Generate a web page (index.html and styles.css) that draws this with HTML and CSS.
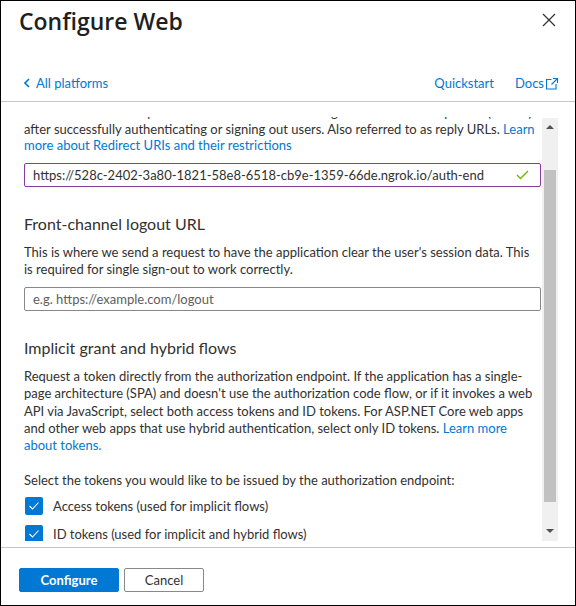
FILE: index.html
```html
<!DOCTYPE html>
<html lang="en">
<head>
<meta charset="utf-8">
<title>Configure Web</title>
<link rel="stylesheet" href="styles.css">
</head>
<body>
<div class="panel">
  <header class="head">
    <h1 class="title">Configure Web</h1>
    <button class="close" aria-label="Close">
      <svg width="14" height="14" viewBox="0 0 14 14"><path d="M1 1L13 13M13 1L1 13" stroke="#323130" stroke-width="1.2" fill="none"/></svg>
    </button>
  </header>
  <nav class="nav">
    <a class="back" href="#">
      <svg width="6" height="10" viewBox="0 0 6 10"><polyline points="5,1 1,5 5,9" fill="none" stroke="#0078d4" stroke-width="1.6"/></svg>
      <span>All platforms</span>
    </a>
    <div class="nav-right">
      <a class="link" href="#">Quickstart</a>
      <a class="link docs" href="#">Docs<svg width="14" height="13" viewBox="0 0 14 13"><path d="M6.5 2.5H1.5v9.5h9.5V7" fill="none" stroke="#0078d4" stroke-width="1.1"/><path d="M8 1.5h4.5V6M12.5 1.5L6.5 7.5" fill="none" stroke="#0078d4" stroke-width="1.1"/></svg></a>
    </div>
  </nav>
  <div class="body">
    <div class="viewport">
      <div class="content">
        <p class="para first">The URIs we will accept as destinations when returning authentication responses (tokens)<br>after successfully authenticating or signing out users. Also referred to as reply URLs. <a class="link" href="#">Learn<br>more about Redirect URIs and their restrictions</a></p>
        <div class="field valid">
          <span class="field-text">https://528c-2402-3a80-1821-58e8-6518-cb9e-1359-66de.ngrok.io/auth-end</span>
          <svg width="13" height="10" viewBox="0 0 13 10"><polyline points="1,5 4.5,8.5 12,1" fill="none" stroke="#6bb700" stroke-width="1.3"/></svg>
        </div>

        <h2 class="section">Front-channel logout URL</h2>
        <p class="para">This is where we send a request to have the application clear the user's session data. This is required for single sign-out to work correctly.</p>
        <div class="field">
          <span class="placeholder">e.g. https://example.com/logout</span>
        </div>

        <h2 class="section">Implicit grant and hybrid flows</h2>
        <p class="para">Request a token directly from the authorization endpoint. If the application has a single-page architecture (SPA) and doesn't use the authorization code flow, or if it invokes a web API via JavaScript, select both access tokens and ID tokens. For ASP.NET Core web apps and other web apps that use hybrid authentication, select only ID tokens. <a class="link" href="#">Learn more about tokens.</a></p>
        <p class="para select">Select the tokens you would like to be issued by the authorization endpoint:</p>
        <label class="check-row">
          <span class="box"><svg width="12" height="10" viewBox="0 0 12 10"><polyline points="1.5,5 4.5,8 10.5,1.5" fill="none" stroke="#fff" stroke-width="1.1"/></svg></span>
          <span>Access tokens (used for implicit flows)</span>
        </label>
        <label class="check-row">
          <span class="box"><svg width="12" height="10" viewBox="0 0 12 10"><polyline points="1.5,5 4.5,8 10.5,1.5" fill="none" stroke="#fff" stroke-width="1.1"/></svg></span>
          <span>ID tokens (used for implicit and hybrid flows)</span>
        </label>
      </div>
    </div>
    <div class="scrollbar">
      <span class="arrow up"></span>
      <span class="thumb"></span>
      <span class="arrow down"></span>
    </div>
  </div>
  <footer class="foot">
    <button class="btn primary">Configure</button>
    <button class="btn">Cancel</button>
  </footer>
</div>
</body>
</html>
```

FILE: styles.css
```css
* { box-sizing: border-box; }
html, body { margin: 0; padding: 0; background: #fff; }
body {
  font-family: Lato, "Open Sans", sans-serif;
  font-size: 13px;
  color: #323130;
}
.panel {
  width: 576px;
  height: 606px;
  border: 1px solid #000;
  display: flex;
  flex-direction: column;
  overflow: hidden;
}
.head {
  display: flex;
  align-items: center;
  justify-content: space-between;
  padding: 3px 18px 0 18px;
  height: 36px;
}
.title {
  margin: 0;
  font-family: "Open Sans", Lato, sans-serif;
  font-size: 23px;
  font-weight: 600;
  line-height: 32px;
  color: #201f1e;
}
.close {
  border: 0;
  background: none;
  padding: 0;
  width: 14px;
  height: 14px;
  margin-right: 1px;
  margin-top: -2px;
  display: flex;
}
.nav {
  margin-top: 37px;
  padding: 0 16px 9px 23px;
  border-bottom: 1px solid #c8c6c4;
  display: flex;
  align-items: center;
  justify-content: space-between;
  line-height: 18px;
}
.link { color: #0078d4; text-decoration: none; }
.back {
  color: #0078d4;
  text-decoration: none;
  display: flex;
  align-items: center;
  gap: 6px;
}
.nav-right { display: flex; gap: 21px; align-items: center; }
.docs { display: flex; align-items: center; gap: 1px; }
.body {
  flex: 1;
  display: flex;
  padding: 15px 17px 6px 23px;
  border-bottom: 1px solid #c8c6c4;
  min-height: 0;
}
.viewport {
  flex: 1;
  overflow: hidden;
  min-width: 0;
}
.content {
  margin-top: -13px;
}
.para {
  margin: 0;
  line-height: 17.3px;
}
.first { line-height: 16.5px; }
.field {
  margin-top: 9px;
  height: 24px;
  border: 1px solid #8a8886;
  border-radius: 2px;
  display: flex;
  align-items: center;
  justify-content: space-between;
  padding: 0 11px 0 8px;
}
.field.valid { border-color: #8a3a9e; }
.field-text { white-space: nowrap; }
.placeholder { color: #605e5c; }
.section {
  margin: 25px 0 9px;
  font-size: 16px;
  font-weight: 400;
  line-height: 22px;
  color: #323130;
}
.field + .section { margin-top: 26px; }
.select { margin-top: 17px; }
.check-row {
  display: flex;
  align-items: center;
  gap: 10px;
  height: 28px;
}
.check-row:first-of-type { margin-top: 3px; }
.box {
  width: 18px;
  height: 18px;
  background: #0078d4;
  border-radius: 2px;
  display: flex;
  align-items: center;
  justify-content: center;
  margin-left: 1px;
}
.scrollbar {
  width: 16px;
  margin-left: 1px;
  margin-top: 1px;
  background: #f0f0f0;
  display: flex;
  flex-direction: column;
  align-items: center;
}
.arrow {
  width: 0;
  height: 0;
  border-left: 4px solid transparent;
  border-right: 4px solid transparent;
}
.arrow.up { border-bottom: 4px solid #505050; margin-top: 7px; }
.arrow.down { border-top: 4px solid #505050; margin-top: 27px; }
.thumb {
  width: 12px;
  height: 332px;
  background: #c1c1c1;
  margin-top: 41px;
}
.foot {
  padding: 20px 18px 0;
  display: flex;
  gap: 5px;
  height: 57px;
}
.btn {
  height: 24px;
  border: 1px solid #8a8886;
  border-radius: 2px;
  background: #fff;
  color: #323130;
  font-family: inherit;
  font-size: 13px;
  padding: 0;
  width: 80px;
}
.btn.primary {
  width: 100px;
  background: #0078d4;
  border-color: #0078d4;
  color: #fff;
  font-weight: 700;
}
```
